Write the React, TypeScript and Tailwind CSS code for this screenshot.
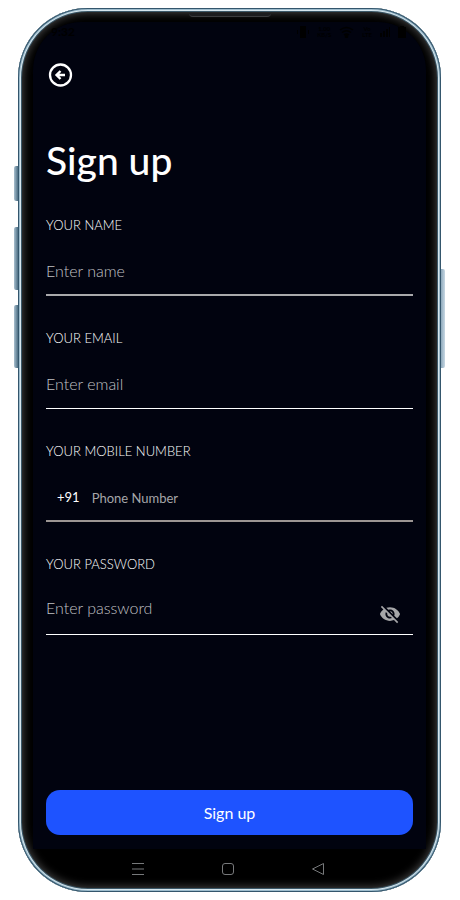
import {InputHTMLAttributes, ReactNode} from "react";

type FieldProps = InputHTMLAttributes<HTMLInputElement> & {
    id: string
    label: string
    line: string
    before?: ReactNode
    after?: ReactNode
    inputClass?: string
    rowClass?: string
}

const Field = ({id, label, line, before, after, inputClass = 'text-[16px] font-light placeholder:text-[#c0c1c4]', rowClass = 'mt-[26px]', ...input}: FieldProps) => {
    return (
        <div className="flex h-[113px] flex-col">
            <label htmlFor={id} className="text-[13px] leading-4 font-light text-white">{label}</label>
            <div className={`flex h-6 items-center ${rowClass}`}>
                {before}
                <input id={id}
                       className={`min-w-0 grow bg-transparent leading-6 text-white outline-none ${inputClass}`}
                       {...input}/>
                {after}
            </div>
            <div className={`mt-auto mb-[34px] ${line}`}/>
        </div>
    )
}

const StatusBar = () => {
    return (
        <div className="flex h-5 items-center justify-between pr-5 pl-[18px] text-black">
            <span className="text-[12px] font-bold leading-5">9:32</span>
            <div className="flex items-center gap-2">
                <svg width="12" height="12" viewBox="0 0 12 12" fill="currentColor" aria-hidden="true">
                    <path d="M3 0h6v12H3zM0 4h1v4H0zM11 4h1v4h-1z"/>
                </svg>
                <div className="text-center text-[6px] font-bold leading-[6px]">
                    <div>1.00</div>
                    <div>KB/S</div>
                </div>
                <svg width="15" height="12" viewBox="0 0 15 12" fill="none" stroke="currentColor" strokeWidth="1.5"
                     aria-hidden="true">
                    <path d="M1 4q6.5-5 13 0M3 6.500q4.500-3.500 9 0M5 9q2.500-2 5 0"/>
                    <circle cx="7.500" cy="10.500" r="1" fill="currentColor"/>
                </svg>
                <div className="text-center text-[6px] font-bold leading-[6px]">
                    <div>Vo</div>
                    <div>LTE</div>
                </div>
                <svg width="10" height="10" viewBox="0 0 10 10" fill="currentColor" aria-hidden="true">
                    <path d="M0 6h2v4H0zM3 4h2v6H3zM6 2h2v8H6zM9 0h1v10H9z"/>
                </svg>
                <svg width="8" height="12" viewBox="0 0 8 12" fill="currentColor" aria-hidden="true">
                    <path d="M0 1h2V0h4v1h2v11H0z"/>
                </svg>
            </div>
        </div>
    )
}

const SystemNav = () => {
    return (
        <nav className="flex h-[39px] items-center justify-center gap-[76px] pr-1 text-[#77797b]">
            <button type="button" aria-label="Recent apps">
                <svg width="14" height="14" viewBox="0 0 14 14" fill="none" stroke="currentColor">
                    <path d="M1 1.500h12M1 7h12M1 12.500h12"/>
                </svg>
            </button>
            <button type="button" aria-label="Home">
                <svg width="14" height="14" viewBox="0 0 14 14" fill="none" stroke="currentColor">
                    <rect x="1.500" y="1.500" width="11" height="11" rx="2.500"/>
                </svg>
            </button>
            <button type="button" aria-label="Back">
                <svg width="14" height="14" viewBox="0 0 14 14" fill="none" stroke="currentColor"
                     strokeLinejoin="round">
                    <path d="M12.500 1.500v11L1.500 7z"/>
                </svg>
            </button>
        </nav>
    )
}

const SignUpForm = () => {
    return (
        <form className="flex grow flex-col px-[13px] pb-[14px]" onSubmit={event => event.preventDefault()}>
            <button type="button" aria-label="Go back" className="mt-[20px] self-start text-white">
                <svg width="28" height="26" viewBox="0 0 28 26" fill="none" stroke="currentColor" strokeWidth="2.300">
                    <circle cx="14.500" cy="13" r="10.500"/>
                    <path d="M19 13h-7M14.500 9l-4 4 4 4" strokeWidth="2.400"/>
                </svg>
            </button>
            <h1 className="mt-12 text-[39px] font-medium leading-[48px] text-white">Sign up</h1>
            <div className="mt-[33px] flex flex-col">
                <Field id="name" label="YOUR NAME" placeholder="Enter name" line="h-[2px] bg-[#a9a9ab]"/>
                <Field id="email" type="email" label="YOUR EMAIL" placeholder="Enter email" line="h-px bg-white"/>
                <Field id="phone" type="tel" label="YOUR MOBILE NUMBER" placeholder="Phone Number"
                       line="h-[2px] bg-[#9c9693]" rowClass="mt-[27px]"
                       inputClass="text-[13px] placeholder:text-[#a5a6a9]"
                       before={<span className="mr-3 ml-[11px] text-[13px] text-white">+91</span>}/>
                <Field id="password" type="password" label="YOUR PASSWORD" placeholder="Enter password"
                       line="h-px bg-white" rowClass="mt-6"
                       after={
                           <button type="button" aria-label="Show password" className="mt-3 mr-3 text-[#a5a6a8]">
                               <svg width="22" height="22" viewBox="0 0 24 24" fill="currentColor">
                                   <path
                                       d="M12 7c2.760 0 5 2.240 5 5 0 .650-.130 1.260-.360 1.830l2.920 2.920c1.510-1.260 2.700-2.890 3.430-4.750-1.730-4.390-6-7.500-11-7.500-1.400 0-2.740.250-3.980.700l2.160 2.160C10.740 7.130 11.350 7 12 7zM2 4.270l2.280 2.280.460.460C3.080 8.300 1.780 10.020 1 12c1.730 4.390 6 7.500 11 7.500 1.550 0 3.030-.300 4.380-.840l.420.420L19.730 22 21 20.730 3.270 3 2 4.270zM7.530 9.800l1.550 1.550c-.050.210-.080.430-.080.650 0 1.660 1.340 3 3 3 .220 0 .440-.030.650-.080l1.550 1.550c-.670.330-1.410.530-2.200.530-2.760 0-5-2.240-5-5 0-.790.200-1.530.530-2.200zm4.310-.780l3.150 3.150.020-.160c0-1.660-1.340-3-3-3l-.170.010z"/>
                               </svg>
                           </button>
                       }/>
            </div>
            <button type="submit"
                    className="mt-[121px] h-[45px] rounded-[14px] bg-[#1e53ff] text-[16px] text-white">
                Sign up
            </button>
        </form>
    )
}

export default function App() {
    return (
        <main className="bg-white py-2 pr-[19px] pl-[18px] font-['Lato',sans-serif]">
            <div className="relative">
                <div className="absolute top-[158px] -left-1 h-[35px] w-1 rounded-l-[2px] bg-linear-to-r from-[#a9c0cf] to-[#4d6f84]"/>
                <div className="absolute top-[219px] -left-1 h-[63px] w-1 rounded-l-[2px] bg-linear-to-r from-[#a9c0cf] to-[#4d6f84]"/>
                <div className="absolute top-[297px] -left-1 h-[63px] w-1 rounded-l-[2px] bg-linear-to-r from-[#a9c0cf] to-[#4d6f84]"/>
                <div className="absolute top-[261px] -right-1 h-[99px] w-1 rounded-r-[2px] bg-linear-to-r from-[#8ea9bb] to-[#c8d8e4]"/>
                <div className="rounded-[70px] bg-black px-[15px] pt-[14px] pb-1 shadow-[inset_0_0_0_1px_#34566c,inset_0_0_0_2px_#9dbccd,inset_0_0_0_3px_#d5e5ec,inset_0_0_0_4px_#3b5767,inset_0_0_8px_5px_#444444]">
                    <div className="flex flex-col rounded-t-[48px] bg-[#01030f]">
                        <StatusBar/>
                        <SignUpForm/>
                    </div>
                    <SystemNav/>
                </div>
                <div className="absolute top-[5px] left-1/2 h-1 w-[82px] -translate-x-1/2 rounded-b-[4px] border-b border-[#3c3d3f] bg-[#1c1d1f]"/>
            </div>
        </main>
    )
}
